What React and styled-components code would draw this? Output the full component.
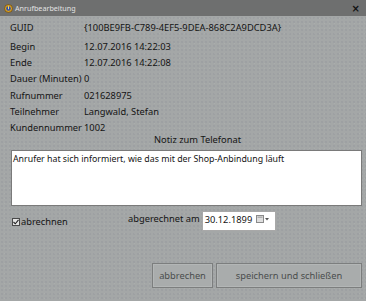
import React from "react";
import styled, { createGlobalStyle } from "styled-components";

const Global = createGlobalStyle`
  html, body { margin: 0; padding: 0; background: #a4a7a7; }
  body { font-family: "Noto Sans", "Open Sans", sans-serif; }
`;

const Window = styled.div`
  width: 366px;
  height: 301px;
  display: flex;
  flex-direction: column;
  background-color: #a4a7a7;
  background-image: radial-gradient(rgba(120,125,140,0.35) 0.6px, transparent 0.8px),
    radial-gradient(rgba(190,190,185,0.3) 0.6px, transparent 0.8px);
  background-size: 4px 4px, 5px 5px;
  background-position: 0 0, 2px 1px;
  color: #141414;
  font-size: 9.3px;
  overflow: hidden;
`;

const TitleBar = styled.div`
  height: 16px;
  flex: none;
  background: #6e6f6f;
  display: flex;
  align-items: center;
  padding: 0 6px 0 4px;
  gap: 2px;
  color: #e2e2e2;
  font-size: 7.2px;
`;

const TitleText = styled.span`
  flex: 1;
`;

const Close = styled.span`
  color: #111;
  font-size: 10px;
  font-weight: bold;
  font-family: "DejaVu Sans", sans-serif;
`;

const Body = styled.div`
  flex: 1;
  display: flex;
  flex-direction: column;
  padding: 4px 4px 0 10px;
`;

const InfoGrid = styled.div`
  display: grid;
  grid-template-columns: 74px 1fr;
  grid-template-rows: 16.2px 2.8px repeat(6, 16.2px);
  align-items: center;
  line-height: 16.2px;
`;

const Label = styled.span`
  white-space: nowrap;
`;

const Value = styled.span`
  white-space: nowrap;
`;

const RowGap = styled.div`
  grid-column: 1 / span 2;
`;

const NoteTitle = styled.div`
  height: 12px;
  line-height: 12px;
  margin-top: -2px;
  padding-left: 144px;
`;

const NoteBox = styled.div`
  margin: 3.8px 0 0 1px;
  height: 56px;
  box-sizing: border-box;
  background: #fff;
  border: 1px solid #7a7a7a;
  padding: 1px 1px;
  line-height: 14px;
  font-size: 8.8px;
`;

const BottomRow = styled.div`
  display: flex;
  align-items: flex-start;
  margin-top: 5px;
  height: 20px;
`;

const CheckLabel = styled.label`
  display: flex;
  align-items: center;
  width: 116px;
  margin-top: 4px;
  margin-left: 2px;
  line-height: 14px;
`;

const CheckBox = styled.span`
  width: 8px;
  height: 8px;
  border: 1px solid #4a4a4a;
  background: #e4e4e4;
  display: flex;
  align-items: center;
  justify-content: center;
  box-sizing: border-box;
  margin-right: 1px;
`;

const DateLabel = styled.span`
  margin-right: 2px;
  line-height: 16px;
`;

const DateInput = styled.div`
  width: 74px;
  height: 20px;
  box-sizing: border-box;
  background: #fff;
  border: 1px solid #a8a8a8;
  display: flex;
  align-items: flex-start;
  padding: 0 0 0 2px;
  line-height: 15px;
`;

const DateText = styled.span`
  flex: 1;
`;

const ButtonRow = styled.div`
  margin-top: auto;
  margin-bottom: 13px;
  display: flex;
  justify-content: flex-end;
  gap: 3px;
`;

const Button = styled.div`
  width: ${(p) => p.$w}px;
  height: 25px;
  box-sizing: border-box;
  border: 1px solid #7c7e7e;
  box-shadow: inset 0 0 0 1px #b3b6b6;
  background: #a9acac;
  color: #4a4c4c;
  display: flex;
  align-items: center;
  justify-content: center;
`;

const rows = [
  ["Begin", "12.07.2016 14:22:03"],
  ["Ende", "12.07.2016 14:22:08"],
  ["Dauer (Minuten)", "0"],
  ["Rufnummer", "021628975"],
  ["Teilnehmer", "Langwald, Stefan"],
  ["Kundennummer", "1002"],
];

const AppIcon = () => (
  <svg width="9" height="9" viewBox="0 0 9 9">
    <circle cx="4.5" cy="4.5" r="4" fill="#d8a020" stroke="#5a3a10" strokeWidth="0.6" />
    <circle cx="4.5" cy="4.5" r="2.3" fill="#3050b0" />
    <rect x="4" y="2.2" width="1" height="3" fill="#ffe060" />
  </svg>
);

const CalIcon = () => (
  <svg width="14" height="9" viewBox="0 0 14 9" style={{ marginTop: 3, marginRight: 5 }}>
    <rect x="0.5" y="0.5" width="7" height="7" fill="#dedede" stroke="#8a8a8a" strokeWidth="1" />
    <rect x="1.5" y="1.5" width="5" height="1.5" fill="#b0b0b0" />
    <path d="M9 3 L13 3 L11 5.5 Z" fill="#555" />
  </svg>
);

export default function App() {
  return (
    <>
      <Global />
      <Window>
        <TitleBar>
          <AppIcon />
          <TitleText>Anrufbearbeitung</TitleText>
          <Close>×</Close>
        </TitleBar>
        <Body>
          <InfoGrid>
            <Label>GUID</Label>
            <Value>{"{100BE9FB-C789-4EF5-9DEA-868C2A9DCD3A}"}</Value>
            <RowGap />
            {rows.map(([l, v]) => (
              <React.Fragment key={l}>
                <Label>{l}</Label>
                <Value>{v}</Value>
              </React.Fragment>
            ))}
          </InfoGrid>
          <NoteTitle>Notiz zum Telefonat</NoteTitle>
          <NoteBox>Anrufer hat sich informiert, wie das mit der Shop-Anbindung läuft</NoteBox>
          <BottomRow>
            <CheckLabel>
              <CheckBox>
                <svg width="6" height="6" viewBox="0 0 6 6">
                  <path d="M0.5 3 L2.3 4.8 L5.5 0.8" fill="none" stroke="#222" strokeWidth="1.1" />
                </svg>
              </CheckBox>
              abrechnen
            </CheckLabel>
            <DateLabel>abgerechnet am</DateLabel>
            <DateInput>
              <DateText>30.12.1899</DateText>
              <CalIcon />
            </DateInput>
          </BottomRow>
          <ButtonRow>
            <Button $w={61}>abbrechen</Button>
            <Button $w={146}>speichern und schließen</Button>
          </ButtonRow>
        </Body>
      </Window>
    </>
  );
}
